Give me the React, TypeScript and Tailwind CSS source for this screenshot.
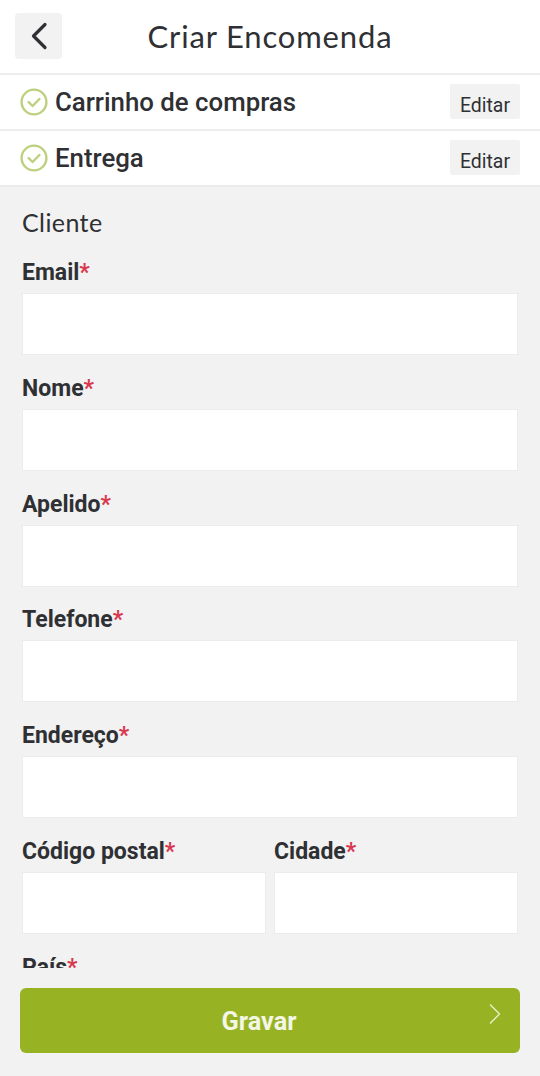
import React from "react";

const roboto = { fontFamily: "Roboto, sans-serif" };

function CheckCircle() {
  return (
    <svg width="28" height="28" viewBox="0 0 28 28" fill="none" className="shrink-0">
      <circle cx="14" cy="14" r="12.4" stroke="#bcd07f" strokeWidth="2.4" />
      <path d="M8.6 14.2l4 3.8 6.8-7" stroke="#bcd07f" strokeWidth="2.4" strokeLinecap="round" strokeLinejoin="round" />
    </svg>
  );
}

function StepRow({ title }: { title: string }) {
  return (
    <div className="flex h-[56px] items-center justify-between border-b-2 border-[#ececec] bg-white pl-[20px] pr-[20px]">
      <div className="flex items-center gap-[7px]">
        <CheckCircle />
        <span className="pt-[2px] text-[25.8px] font-medium leading-none text-[#2f3033]">{title}</span>
      </div>
      <button className="mt-[-1px] flex h-[35px] w-[70px] items-center justify-center rounded-[2px] bg-[#f2f2f2] pt-[8px] text-[19.4px] font-normal text-[#2f3033]">
        Editar
      </button>
    </div>
  );
}

function Field({ label, className }: { label: string; className?: string }) {
  return (
    <div className={className}>
      <label className="block h-[34px] text-[23px] font-bold leading-[34px] text-[#2f3033]">
        {label}
        <span className="text-[#d8394f]">*</span>
      </label>
      <input className="mt-[3px] block h-[62px] w-full border border-[#ececec] bg-white" type="text" />
    </div>
  );
}

export default function App() {
  return (
    <div className="flex h-[1076px] w-[540px] flex-col overflow-hidden bg-[#f2f2f2]" style={roboto}>
      <header className="relative flex h-[75px] shrink-0 items-center justify-center border-b-2 border-[#ececec] bg-white">
        <button className="absolute left-[15px] top-[13px] flex h-[46px] w-[47px] items-center justify-center rounded-[4px] bg-[#f2f2f2]">
          <svg width="18" height="28" viewBox="0 0 18 28" fill="none">
            <path d="M15 2.5L3.5 14 15 25.5" stroke="#2f3033" strokeWidth="3.2" strokeLinecap="round" strokeLinejoin="round" />
          </svg>
        </button>
        <h1 className="text-[31px] font-normal tracking-[0.85px] text-[#2f3033]" style={{ fontFamily: "Lato, sans-serif" }}>
          Criar Encomenda
        </h1>
      </header>
      <StepRow title="Carrinho de compras" />
      <StepRow title="Entrega" />

      <main className="min-h-0 flex-1 overflow-hidden px-[22px] pt-[19px]">
        <h2 className="h-[32px] text-[25px] leading-[32px] tracking-[0.4px] text-[#2f3033]" style={{ fontFamily: "Lato, sans-serif" }}>
          Cliente
        </h2>
        <div className="mt-[18px] flex flex-col gap-[16.8px]">
          <Field label="Email" />
          <Field label="Nome" />
          <Field label="Apelido" />
          <Field label="Telefone" />
          <Field label="Endereço" />
          <div className="flex gap-[8px]">
            <Field label="Código postal" className="flex-1" />
            <Field label="Cidade" className="flex-1" />
          </div>
          <Field label="País" />
        </div>
      </main>

      <footer className="shrink-0 px-[20px] pb-[23px] pt-[20px]">
        <button className="relative flex h-[65px] w-full items-center justify-center rounded-[6px] bg-[#97b324] pt-[2px] text-[25.3px] font-bold text-[#f4f6e6]">
          <span className="pr-[22px]">Gravar</span>
          <svg className="absolute right-[18px] top-[15px]" width="14" height="22" viewBox="0 0 14 22" fill="none">
            <path d="M2 1.5L11.5 11 2 20.5" stroke="#e9efc8" strokeWidth="1.4" />
          </svg>
        </button>
      </footer>
    </div>
  );
}
